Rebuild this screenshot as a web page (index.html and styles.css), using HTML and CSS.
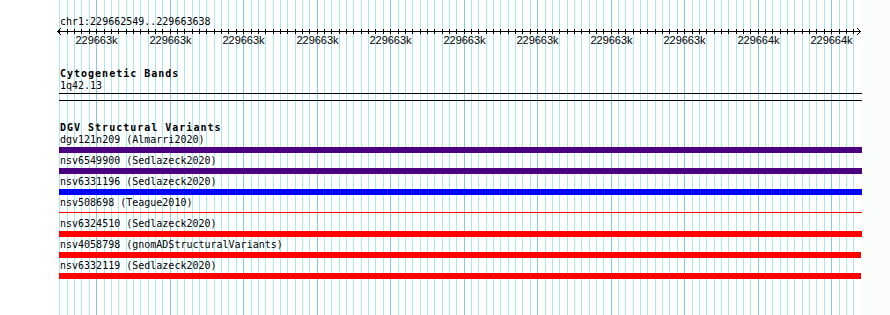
FILE: index.html
```html
<!DOCTYPE html>
<html>
<head>
<meta charset="utf-8">
<title>Genome view</title>
<link rel="stylesheet" href="styles.css">
</head>
<body>
<div class="view">
  <svg class="grid" id="grid" width="862" height="315" shape-rendering="crispEdges"></svg>
  <div class="locus">chr1:229662549..229663638</div>
  <svg class="ruler" id="ruler" width="862" height="17" shape-rendering="crispEdges"></svg>
  <section class="track cyto">
    <div class="track-title">Cytogenetic Bands</div>
    <div class="band-label">1q42.13</div>
    <div class="band-line"></div>
  </section>
  <div class="track-sep"></div>
  <section class="track dgv">
    <div class="track-title dgv-title">DGV Structural Variants</div>
    <div class="feature"><div class="flabel">dgv121n209 (Almarri2020)</div><div class="fbar loss"></div></div>
    <div class="feature"><div class="flabel">nsv6549900 (Sedlazeck2020)</div><div class="fbar loss"></div></div>
    <div class="feature"><div class="flabel">nsv6331196 (Sedlazeck2020)</div><div class="fbar gain"></div></div>
    <div class="feature"><div class="flabel">nsv508698 (Teague2010)</div><div class="fbar del thin"></div></div>
    <div class="feature"><div class="flabel">nsv6324510 (Sedlazeck2020)</div><div class="fbar del"></div></div>
    <div class="feature"><div class="flabel">nsv4058798 (gnomADStructuralVariants)</div><div class="fbar del short"></div></div>
    <div class="feature"><div class="flabel">nsv6332119 (Sedlazeck2020)</div><div class="fbar del short"></div></div>
  </section>
</div>
<script src="script.js"></script>
</body>
</html>
```

FILE: styles.css
```css
html, body {
  margin: 0;
  padding: 0;
}
body {
  background: #fbfdfb;
  font-family: "DejaVu Sans Mono", "Liberation Mono", monospace;
  font-size: 10px;
  color: #000;
}
.view {
  position: relative;
  isolation: isolate;
  width: 862px;
  height: 315px;
  background: #ffffff;
  overflow: hidden;
}
.grid {
  position: absolute;
  left: 0;
  top: 0;
  z-index: -1;
}
.locus {
  padding: 15px 0 0 60px;
  line-height: 13px;
  white-space: nowrap;
}
.ruler {
  display: block;
}
.ruler text {
  font-family: "Liberation Sans", Arial, sans-serif;
  font-size: 11px;
  fill: #000;
}
.track-title {
  font-weight: bold;
  letter-spacing: 1px;
  line-height: 12px;
  padding-left: 60px;
  white-space: nowrap;
}
.cyto {
  padding-top: 23px;
}
.band-label {
  padding-left: 60px;
  line-height: 11px;
}
.band-line {
  margin: 2px 0 0 59px;
  width: 803px;
  height: 1px;
  background: #000;
}
.track-sep {
  margin: 6px 0 0 59px;
  width: 803px;
  height: 1px;
  background: #000;
}
.dgv {
  padding-top: 20px;
}
.dgv-title {
  line-height: 13px;
}
.feature {
  display: flex;
  flex-direction: column;
}
.flabel {
  padding-left: 60px;
  line-height: 12px;
  white-space: nowrap;
}
.fbar {
  margin: 1px 0 2px 59px;
  width: 803px;
  height: 6px;
}
.fbar.short {
  width: 802px;
}
.fbar.thin {
  height: 1px;
  margin: 3px 0 5px 59px;
}
.loss { background: #4b0082; }
.gain { background: #0000ff; }
.del { background: #ff0000; }
```

FILE: script.js
```js
(function () {
  var NS = "http://www.w3.org/2000/svg";
  var start = 229662549, x0 = 59.2, scale = 0.735;
  function pos(b) { return Math.floor(x0 + (b - start) * scale); }
  function el(name, attrs, parent) {
    var e = document.createElementNS(NS, name);
    for (var k in attrs) e.setAttribute(k, attrs[k]);
    parent.appendChild(e);
    return e;
  }
  var grid = document.getElementById("grid");
  var ruler = document.getElementById("ruler");
  // axis line
  el("rect", { x: 57, y: 3, width: 804, height: 1, fill: "#000" }, ruler);
  for (var b = 229662550; b <= 229663630; b += 10) {
    var x = pos(b);
    var major = b % 100 === 0;
    el("rect", { x: x, y: 0, width: 1, height: 315, fill: major ? "#88c6e6" : "#aae8f0" }, grid);
    el("rect", { x: x, y: 1, width: 1, height: 5, fill: "#000" }, ruler);
    if (major) {
      var t = el("text", { x: x + 0.5, y: 16, "text-anchor": "middle" }, ruler);
      t.textContent = Math.round(b / 1000) + "k";
    }
  }
  // arrowheads
  el("polyline", { points: "61,0 57.5,3.5 61,7", fill: "none", stroke: "#000", "stroke-width": 1, "shape-rendering": "auto" }, ruler);
  el("polyline", { points: "857,0 860.5,3.5 857,7", fill: "none", stroke: "#000", "stroke-width": 1, "shape-rendering": "auto" }, ruler);
})();
```
